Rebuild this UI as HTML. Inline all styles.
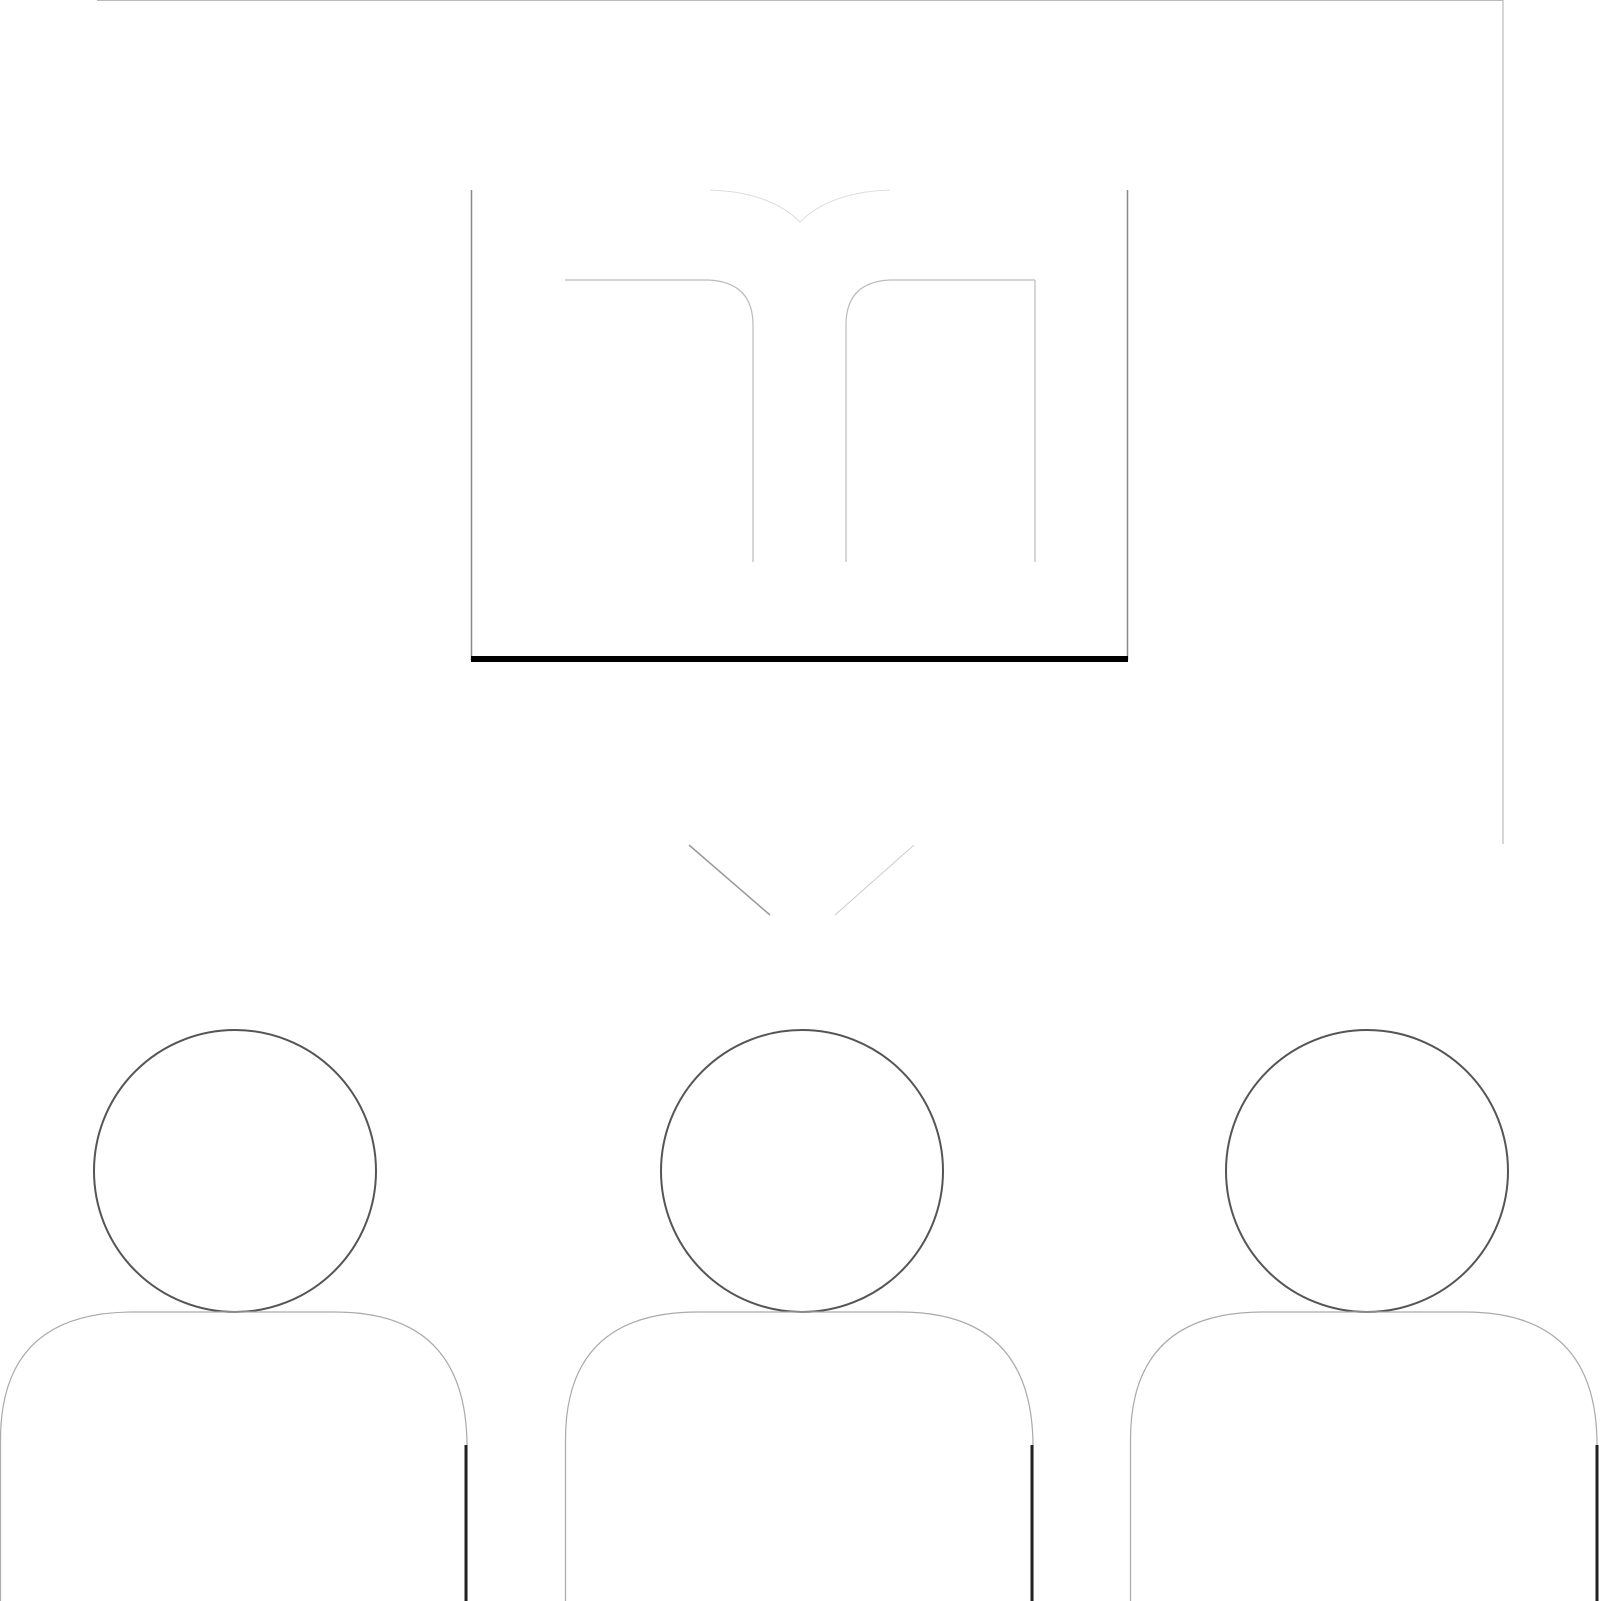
<!DOCTYPE html>
<html><head><meta charset="utf-8"><style>
html,body{margin:0;padding:0;background:#fff;width:1600px;height:1601px;overflow:hidden}
</style></head><body>
<svg width="1600" height="1601" viewBox="0 0 1600 1601" xmlns="http://www.w3.org/2000/svg">
<rect width="1600" height="1601" fill="#fff"/>
<!-- board -->
<line x1="97" y1="0.5" x2="1503" y2="0.5" stroke="#bbb" stroke-width="1"/>
<line x1="1503" y1="0" x2="1503" y2="844" stroke="#bbb" stroke-width="1.2"/>
<line x1="689" y1="845" x2="770" y2="915" stroke="#999" stroke-width="1.5"/>
<line x1="914" y1="845" x2="835" y2="915" stroke="#ccc" stroke-width="1"/>
<!-- book -->
<line x1="471.5" y1="190" x2="471.5" y2="660" stroke="#888" stroke-width="1.5"/>
<line x1="1127.5" y1="190" x2="1127.5" y2="660" stroke="#888" stroke-width="1.5"/>
<rect x="471" y="656" width="657" height="6" fill="#000"/>
<path d="M710 190 Q770 192 800 222 Q830 192 890 190" fill="none" stroke="#ddd" stroke-width="1"/>
<path d="M565 280 H708 Q753 282 753 325 V562" fill="none" stroke="#bbb" stroke-width="1.2"/>
<path d="M1035 280 V562 M1035 280 H890 Q846 282 846 325 V562" fill="none" stroke="#bbb" stroke-width="1.2"/>
<!-- people -->
<g fill="#fff" stroke="#555" stroke-width="2">
<circle cx="235" cy="1171" r="141"/>
<circle cx="802" cy="1171" r="141"/>
<circle cx="1367" cy="1171" r="141"/>
</g>
<g fill="none" stroke="#222" stroke-width="3">
<path d="M0.5 1601 V1440 Q0.5 1312 133 1312 H335 Q466 1312 467 1445 V1601" stroke="#aaa" stroke-width="1.2"/>
<path d="M466 1445 V1601"/>
<path d="M565.5 1601 V1440 Q565.5 1312 698 1312 H900 Q1032 1312 1033 1445 V1601" stroke="#aaa" stroke-width="1.2"/>
<path d="M1032 1445 V1601"/>
<path d="M1130.5 1601 V1440 Q1130.5 1312 1263 1312 H1465 Q1597 1312 1597 1445 V1601" stroke="#aaa" stroke-width="1.2"/>
<path d="M1597 1445 V1601"/>
</g>
</svg>
</body></html>
